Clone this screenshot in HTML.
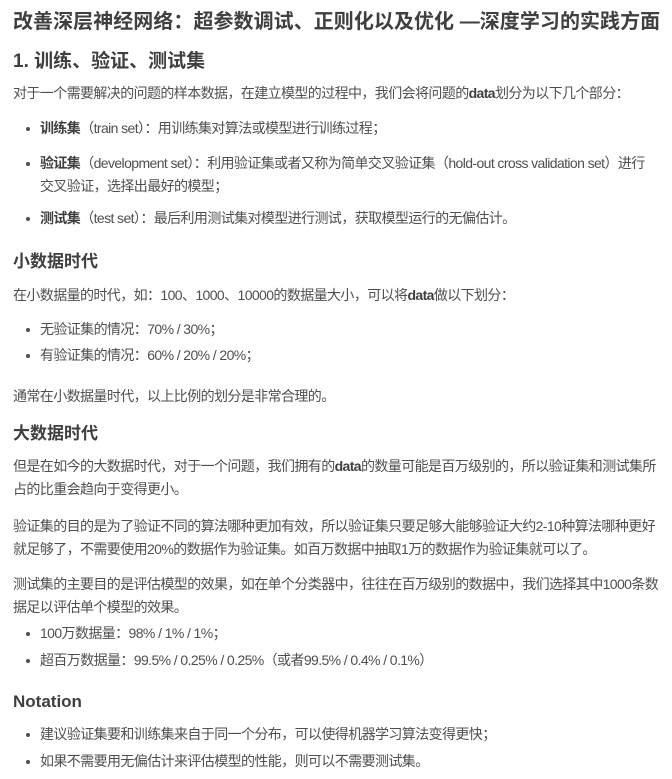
<!DOCTYPE html>
<html><head><meta charset="utf-8"><style>
body{margin:0;width:672px;height:779px;overflow:hidden;background:#fff;color:#4f4f4f;font-family:"Liberation Sans","Noto Sans CJK SC",sans-serif;font-size:14px;}
.a{position:absolute;left:13px;white-space:nowrap;line-height:23px;letter-spacing:-0.6px}
.t{font-size:20px;font-weight:bold;color:#3f3f3f;line-height:30px;letter-spacing:0.05px}
.h2{font-size:19px;font-weight:bold;color:#3f3f3f;line-height:26px;letter-spacing:0}
.h3{font-size:17px;font-weight:bold;color:#3f3f3f;line-height:24px;letter-spacing:0}
.li{left:40px}
.li:before{content:"";position:absolute;left:-14px;top:10px;width:4px;height:4px;border-radius:50%;background:#4f4f4f}
b{color:#3f3f3f}
</style></head><body>
<div class="a t" style="top:7px">改善深层神经网络：超参数调试、正则化以及优化 —深度学习的实践方面</div>
<div class="a h2" style="top:49px">1. 训练、验证、测试集</div>
<div class="a" style="top:82px">对于一个需要解决的问题的样本数据，在建立模型的过程中，我们会将问题的<b>data</b>划分为以下几个部分：</div>
<div class="a li" style="top:117px"><b>训练集</b>（train set）：用训练集对算法或模型进行训练过程；</div>
<div class="a li" style="top:152px"><b>验证集</b>（development set）：利用验证集或者又称为简单交叉验证集（hold-out cross validation set）进行<br>交叉验证，选择出最好的模型；</div>
<div class="a li" style="top:207px"><b>测试集</b>（test set）：最后利用测试集对模型进行测试，获取模型运行的无偏估计。</div>
<div class="a h3" style="top:250px">小数据时代</div>
<div class="a" style="top:284px">在小数据量的时代，如：100、1000、10000的数据量大小，可以将<b>data</b>做以下划分：</div>
<div class="a li" style="top:318px">无验证集的情况：70% / 30%；</div>
<div class="a li" style="top:344px">有验证集的情况：60% / 20% / 20%；</div>
<div class="a" style="top:385px">通常在小数据量时代，以上比例的划分是非常合理的。</div>
<div class="a h3" style="top:422px">大数据时代</div>
<div class="a" style="top:455px">但是在如今的大数据时代，对于一个问题，我们拥有的<b>data</b>的数量可能是百万级别的，所以验证集和测试集所<br>占的比重会趋向于变得更小。</div>
<div class="a" style="top:515px">验证集的目的是为了验证不同的算法哪种更加有效，所以验证集只要足够大能够验证大约2-10种算法哪种更好<br>就足够了，不需要使用20%的数据作为验证集。如百万数据中抽取1万的数据作为验证集就可以了。</div>
<div class="a" style="top:573px">测试集的主要目的是评估模型的效果，如在单个分类器中，往往在百万级别的数据中，我们选择其中1000条数<br>据足以评估单个模型的效果。</div>
<div class="a li" style="top:622px">100万数据量：98% / 1% / 1%；</div>
<div class="a li" style="top:649px">超百万数据量：99.5% / 0.25% / 0.25%（或者99.5% / 0.4% / 0.1%）</div>
<div class="a h3" style="top:690px">Notation</div>
<div class="a li" style="top:723px">建议验证集要和训练集来自于同一个分布，可以使得机器学习算法变得更快；</div>
<div class="a li" style="top:750px">如果不需要用无偏估计来评估模型的性能，则可以不需要测试集。</div>
</body></html>
